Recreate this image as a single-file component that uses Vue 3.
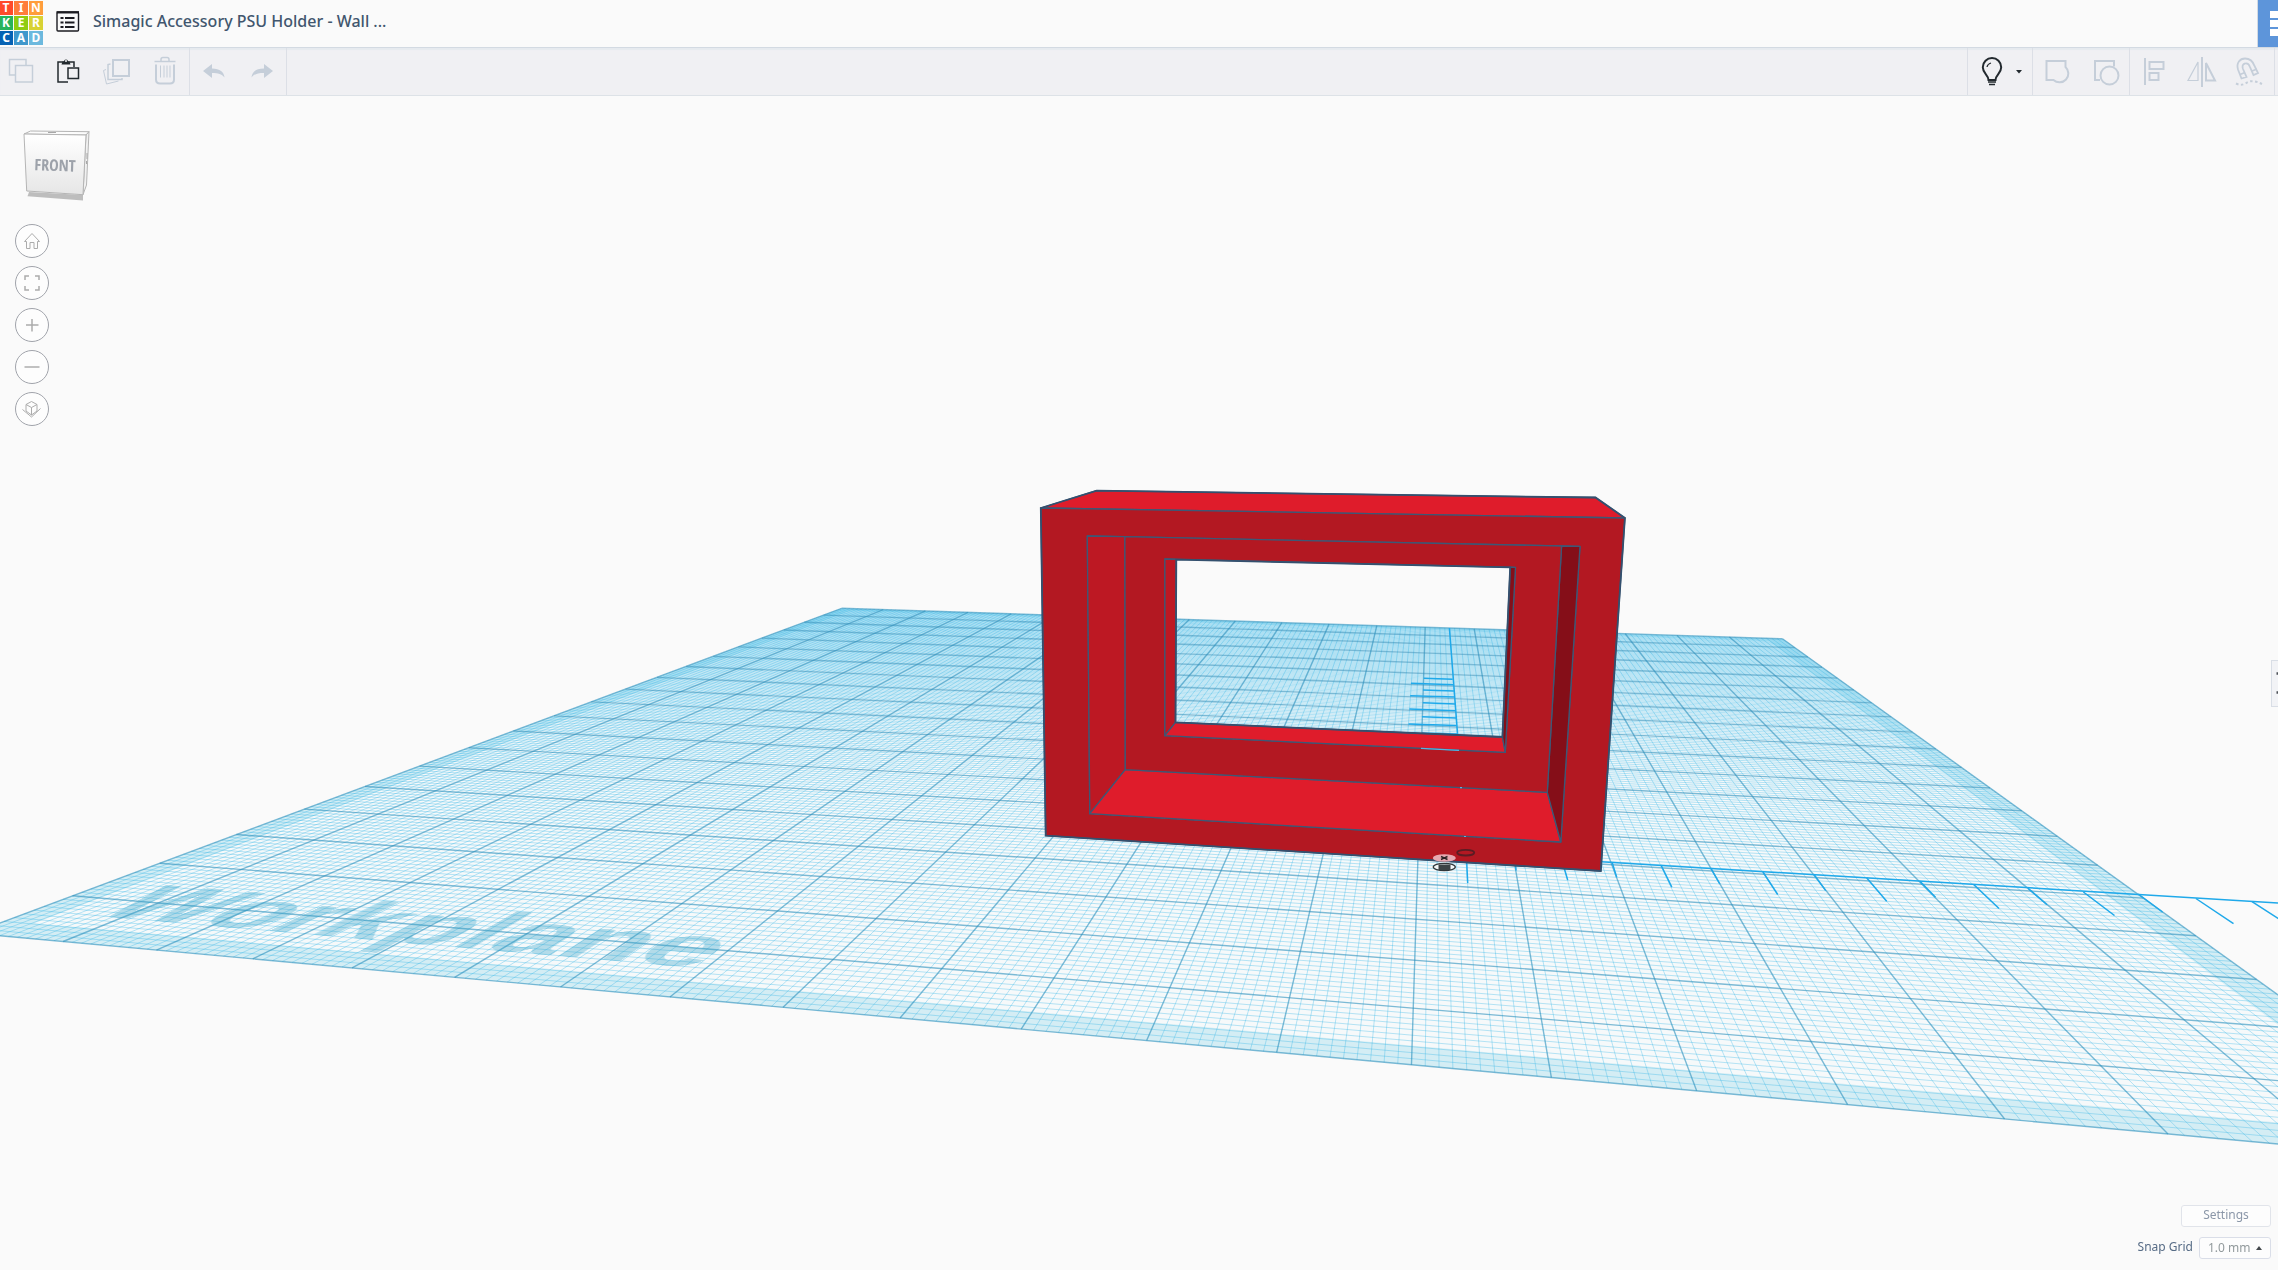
<script setup>
import { ref, computed, onMounted, onBeforeUnmount } from 'vue'

const SCENE_W = 2278
const TOP = 96
const CELLS = 20
const PLANE = 2000

/* corners of the workplane: back left, back right, front right, front left */
const corners = [[841.7, 608.3], [1782.5, 638.8], [2515.6, 1165.7], [-27.5, 933.2]]

function squareToQuad([p0, p1, p2, p3]) {
  const dx1 = p1[0] - p2[0], dx2 = p3[0] - p2[0], dx3 = p0[0] - p1[0] + p2[0] - p3[0]
  const dy1 = p1[1] - p2[1], dy2 = p3[1] - p2[1], dy3 = p0[1] - p1[1] + p2[1] - p3[1]
  const den = dx1 * dy2 - dx2 * dy1
  const g = (dx3 * dy2 - dx2 * dy3) / den
  const h = (dx1 * dy3 - dx3 * dy1) / den
  return {
    a: p1[0] - p0[0] + g * p1[0], b: p3[0] - p0[0] + h * p3[0], c: p0[0],
    d: p1[1] - p0[1] + g * p1[1], e: p3[1] - p0[1] + h * p3[1], f: p0[1],
    g, h
  }
}
const m = squareToQuad(corners)
function project(u, v) {
  const w = m.g * u + m.h * v + 1
  return [((m.a * u + m.b * v + m.c) / w).toFixed(2), ((m.d * u + m.e * v + m.f) / w).toFixed(2)]
}
const seg = (u0, v0, u1, v1) => `M${project(u0, v0)}L${project(u1, v1)}`

/* the two directions stay separate paths so that their opacities add up */
function gridPaths(count, skip) {
  let columns = ''
  let rows = ''
  for (let i = 0; i <= count; i++) {
    if (skip && i % skip === 0) continue
    const t = i / count
    columns += seg(t, 0, t, 1)
    rows += seg(0, t, 1, t)
  }
  return [columns, rows]
}
const minor = gridPaths(CELLS * 10, 10)
const major = gridPaths(CELLS, 0)
const poly = (pts) => 'M' + pts.map((p) => project(p[0], p[1])).join('L') + 'Z'
const outline = poly([[0, 0], [1, 0], [1, 1], [0, 1]])
const B = 0.016
const band = outline + poly([[B, B], [1 - B, B], [1 - B, 1 - B], [B, 1 - B]])

const scale = ref(window.innerWidth / SCENE_W)
const measure = () => { scale.value = document.documentElement.clientWidth / SCENE_W }
onMounted(() => { measure(); window.addEventListener('resize', measure) })
onBeforeUnmount(() => window.removeEventListener('resize', measure))

const planeTransform = computed(() => {
  const s = scale.value
  const n = PLANE
  const f = m.f - TOP
  const d = m.d - TOP * m.g
  const e = m.e - TOP * m.h
  return `matrix3d(${[
    s * m.a / n, s * d / n, 0, m.g / n,
    s * m.b / n, s * e / n, 0, m.h / n,
    0, 0, 1, 0,
    s * m.c, s * f, 0, 1
  ].join(',')})`
})

const logo = [
  ['T', '#ff4a2b'], ['I', '#ff7d3b'], ['N', '#ff9d3b'],
  ['K', '#27b35c'], ['E', '#8fcc12'], ['R', '#d8d234'],
  ['C', '#0562b4'], ['A', '#3f98cc'], ['D', '#6cb9de']
]

const ruler = 'M1449.4 628L1457.6 734.3M1600.8 861.7L2278 903'
const rulerTicks =
  'M1423.700 678.300L1452.700 679.300M1411 683.300L1453.500 684.700M1422.900 690L1453.900 691M1410.200 695.700L1454.700 697M1422.900 702.700L1455.500 704M1409.400 709L1455.500 710.700M1422 716.700L1456.300 718M1408.600 724L1456.700 725.500M1422 733L1457 734' +
  'M1466.700 861.700L1467.700 883M1515.700 865.500L1516 870.500M1564.300 868.500L1567.700 880M1612.300 863L1616.700 877.300' +
  'M1661 865.200L1671.800 887.200M1711 868.600L1719.800 884M1763 872L1777.700 894.500M1814 874.500L1825.700 890.600M1866.800 878L1886.700 901.300M1920 881.400L1935.500 897.200M1974 884.800L1999 908.500M2028 888.200L2047 904.800M2083.400 892L2114.500 915.500M2138.300 894L2162.500 912M2195.900 898.500L2233.500 923.700M2252 901.600L2290 926'
</script>

<template>
  <div class="app">
    <header class="header">
      <a class="logo" href="#" aria-label="Tinkercad">
        <span v-for="([letter, color]) in logo" :key="letter" class="tile" :style="{ background: color }">{{ letter }}</span>
      </a>
      <button class="menu" type="button" aria-label="My recent designs">
        <svg width="24" height="22" viewBox="0 0 24 22">
          <rect x="1" y="1.500" width="21.500" height="18.500" rx="1" fill="none" stroke="#1c1c22" stroke-width="1.400" />
          <path d="M0.500 1.200H23" stroke="#1c1c22" stroke-width="2.200" />
          <path d="M4.500 7h3M9 7h9.500M4.500 11.500h3M9 11.500h9.500M4.500 16h3M9 16h9.500" stroke="#1c1c22" stroke-width="2" />
        </svg>
      </button>
      <h1 class="title">Simagic Accessory PSU Holder - Wall ...</h1>
      <button class="grid-button" type="button" aria-label="3D design">
        <svg width="20" height="47" viewBox="0 0 20 47">
          <path d="M12 11h8v7h-8zM12 20h8v7h-8zM12 29h8v7h-8z" fill="#fff" />
        </svg>
      </button>
    </header>

    <nav class="toolbar" aria-label="Tools">
      <div class="group first">
        <button class="tool" type="button" aria-label="Copy" disabled>
          <svg viewBox="0 0 30 30"><path d="M9 18H3.500V2.500H20V8M9.500 8.500h17v16.500h-17z" /></svg>
        </button>
        <button class="tool dark" type="button" aria-label="Paste">
          <svg viewBox="0 0 30 30">
            <path d="M14 25H4V5H20V10M14 11h10.500v10.500h-10.500z" stroke-width="1.500" />
            <path d="M8.500 4.500h1.500a2 2 0 0 1 4 0h1.500l1 3h-9z" fill="#22292e" stroke="none" />
            <circle cx="12" cy="4" r="1" fill="#f0f0f3" stroke="none" />
          </svg>
        </button>
        <button class="tool" type="button" aria-label="Duplicate" disabled>
          <svg viewBox="0 0 30 30">
            <path d="M11 3h16v16h-16z" stroke-width="2" />
            <path d="M8.500 7l-2.500 .5V22.500h14v-1.500" /><path d="M4 12.500l-2.500 1 3 13.500 12-3" stroke-width="1" />
          </svg>
        </button>
        <button class="tool" type="button" aria-label="Delete" disabled>
          <svg viewBox="0 0 30 30">
            <path d="M4.500 4.500h21M11 4V2.500q0-2 2-2h4q2 0 2 2V4" />
            <path d="M6 7.500v15q0 4 4 4h10q4 0 4-4v-15" stroke-width="2" />
            <path d="M10.500 8.500v12M14 8.500v12M17 8.500v12M20 8.500v12" stroke-width="1" />
          </svg>
        </button>
      </div>
      <div class="group">
        <button class="tool" type="button" aria-label="Undo" disabled>
          <svg viewBox="0 0 30 30"><path d="M4 14L13 7v4.500c8 0 12 3.500 12.500 9-3-3.500-6-4.500-12.500-4.500v5z" fill="#c5ced9" stroke="none" /></svg>
        </button>
        <button class="tool" type="button" aria-label="Redo" disabled>
          <svg viewBox="0 0 30 30"><path d="M26 14L17 7v4.500c-8 0-12 3.500-12.500 9 3-3.500 6-4.500 12.500-4.500v5z" fill="#c5ced9" stroke="none" /></svg>
        </button>
      </div>
      <div class="group right">
        <button class="tool dark bulb" type="button" aria-label="Toggle notes visibility">
          <svg viewBox="0 0 30 30">
            <path d="M11.500 23c0-5-5.700-6.500-5.700-12.800a9.200 9.200 0 0 1 18.400 0c0 6.300-5.700 7.800-5.700 12.800z" stroke-width="2" />
            <path d="M10 10q.5-3 4-4" stroke-width="1.200" />
            <path d="M11 25h8M12 27.500h6" stroke-width="1.500" />
          </svg>
          <svg class="caret" viewBox="0 0 6 4"><path d="M0 0h6L3 3.500z" fill="#22292e" stroke="none" /></svg>
        </button>
      </div>
      <div class="group">
        <button class="tool" type="button" aria-label="Group" disabled>
          <svg viewBox="0 0 30 30"><path d="M4.500 4h19v6a8.500 8.500 0 1 1-12 13H4.500z" stroke-width="2" /></svg>
        </button>
        <button class="tool" type="button" aria-label="Ungroup" disabled>
          <svg viewBox="0 0 30 30"><path d="M10 23H5V4h19v5.500" stroke-width="2" /><circle cx="19.500" cy="18.500" r="9" stroke-width="2" /></svg>
        </button>
      </div>
      <div class="group last">
        <button class="tool" type="button" aria-label="Align" disabled>
          <svg viewBox="0 0 30 30">
            <path d="M6 1v27" stroke-width="2" /><path d="M10.500 5h14v7h-14zM10.500 16h9v7h-9z" stroke-width="2" />
          </svg>
        </button>
        <button class="tool" type="button" aria-label="Mirror" disabled>
          <svg viewBox="0 0 30 30">
            <path d="M15 0v30" stroke-width="2" /><path d="M11 5v18.500H1z" stroke-width="1.200" /><path d="M19 6v17.500h9z" stroke-width="2" />
          </svg>
        </button>
        <button class="tool" type="button" aria-label="Cruise" disabled>
          <svg viewBox="0 0 30 30">
            <path d="M6.500 21.500L3 12.500C1 6 5 1.500 10 1.500c5 0 8 3 9.500 7.500l3.500 7-4.500 2-3.500-8c-1-3-3-4-5-3.500-2.500.5-3 3-2 5.500l3.500 8zM5 17.500l5-2M17 14l5-2" stroke-width="1.800" />
            <path d="M1 26.500c6 3 9 0 12-1.500s8-1 14 2" stroke-width="2" stroke-dasharray="2.500 2.500" />
          </svg>
        </button>
      </div>
    </nav>

    <main class="viewport">
      <svg class="scene" viewBox="0 96 2278 1174" aria-hidden="true">
        <path :d="outline" fill="#3fbcec" fill-opacity="0.02" />
        <path :d="band" fill="#3fb8da" fill-opacity="0.18" fill-rule="evenodd" />
        <path v-for="(d, i) in minor" :key="'minor' + i" :d="d" class="minor" />
        <path v-for="(d, i) in major" :key="'major' + i" :d="d" class="major" />
        <path :d="ruler" class="ruler" />
        <path :d="rulerTicks" class="ruler" />
      </svg>
      <div class="plane" :style="{ transform: planeTransform }">
        <span class="plane-label">Workplane</span>
      </div>
      <svg class="scene" viewBox="0 96 2278 1174" role="img" aria-label="Red wall holder model">
        <g stroke="#3d5876" stroke-width="1.300" stroke-linejoin="round">
          <path d="M1040.800 508L1096.700 490.700 1595.500 497.500 1624.900 518z" fill="#df1c2b" />
          <path fill-rule="evenodd" fill="#b31822" d="M1040.800 508L1624.900 518 1600.800 871 1045.700 835.700zM1087.300 536L1089.800 813.700 1560.800 842 1580 546.300z" />
          <path fill="#bd1823" d="M1087.300 536L1124.900 536.700 1125.300 769.700 1089.800 813.700z" />
          <path fill="#df1c2b" d="M1125.300 769.700L1547.300 792.300 1560.800 842 1089.800 813.700z" />
          <path fill="#850e18" d="M1561.600 546L1580 546.300 1560.800 842 1547.300 792.300z" />
          <path fill-rule="evenodd" fill="#b31822" d="M1124.900 536.700L1561.600 546 1547.300 792.300 1125.300 769.700zM1164.900 559L1164.900 735.700 1505.300 752.300 1515.500 567.300z" />
          <path fill="#bd1823" d="M1164.900 559L1176.300 559.300 1175.500 722.300 1164.900 735.700z" />
          <path fill="#df1c2b" d="M1175.500 722.300L1502.400 737 1505.300 752.300 1164.900 735.700z" />
          <path fill="#850e18" d="M1510.200 567.200L1515.500 567.300 1505.300 752.300 1502.400 737z" />
        </g>
        <path d="M1040.800 508L1096.700 490.700 1595.500 497.500 1624.900 518 1600.800 871 1045.700 835.700zM1176.300 559.700L1510.200 567.300 1502.400 737 1175.500 722.300z" fill="none" stroke="#34506e" stroke-width="1.800" />
        <path d="M1421 748.300L1459 750.300M1460 787.700h2M1464 836.500h2" stroke="#55b4e2" stroke-width="1.200" />
        <ellipse cx="1465.700" cy="852.700" rx="8.500" ry="2.800" fill="none" stroke="#5a1d24" stroke-width="1.800" />
        <ellipse cx="1444.300" cy="858" rx="11.500" ry="3.800" fill="#e6a9b1" />
        <path d="M1441 856.500l6.500 3M1447.500 856.500l-6.500 3" stroke="#2b2224" stroke-width="1.400" />
        <ellipse cx="1444.300" cy="867" rx="11" ry="3.600" fill="#f3f7f8" stroke="#30373a" stroke-width="1.300" />
        <path d="M1438.500 864.500h12v5.500h-12z" fill="#3c4346" />
      </svg>

      <aside class="nav-controls">
        <button class="cube" type="button" aria-label="View cube, front">
          <svg width="68" height="74" viewBox="23 129 68 74">
            <defs>
              <linearGradient id="face" x1="0" y1="0" x2="0" y2="1">
                <stop offset="0" stop-color="#ffffff" /><stop offset="1" stop-color="#e6e6e6" />
              </linearGradient>
            </defs>
            <path d="M29 192L83 195 83 200.500 27.500 196.300z" fill="#bdbdbd" />
            <g stroke="#b4b4b4" stroke-width="1">
              <path d="M24 134L30.500 131 89 131.700 86 135z" fill="#fcfcfc" />
              <path d="M86 135L89 131.700 86.500 185 83 194.700z" fill="#f1f1f1" />
              <path d="M24 134L86 135 83 194.700 26.700 191z" fill="url(#face)" />
            </g>
            <path d="M48 132.500h8M87 153v6M86.500 161v3" stroke="#a8a8a8" stroke-width="1" />
            <text x="55" y="171" class="cube-text" transform="rotate(2 55 166)">FRONT</text>
          </svg>
        </button>
        <button class="round" type="button" aria-label="Home view">
          <svg viewBox="0 0 34 34"><path d="M9.500 17.500L17 9.500l7.500 8h-2v7H19v-6h-4v6h-3.500v-7z" /></svg>
        </button>
        <button class="round" type="button" aria-label="Fit all in view">
          <svg viewBox="0 0 34 34"><path d="M10 14v-4h4M20 10h4v4M24 20v4h-4M14 24h-4v-4" stroke-width="1.500" /></svg>
        </button>
        <button class="round" type="button" aria-label="Zoom in">
          <svg viewBox="0 0 34 34"><path d="M11 17h12.500M17 11v12.500" stroke-width="1.500" /></svg>
        </button>
        <button class="round" type="button" aria-label="Zoom out">
          <svg viewBox="0 0 34 34"><path d="M9.500 17h15" stroke-width="1.500" /></svg>
        </button>
        <button class="round" type="button" aria-label="Switch to flat view">
          <svg viewBox="0 0 34 34"><path d="M16.500 9.500l5.500 3v6.500l-5.500 4-5.500-4v-6.500zM11 12.500l5.500 3 5.500-3M16.500 15.500v7.500M7.500 17.500l9 7.500 9-8.500" /></svg>
        </button>
      </aside>

      <button class="panel-handle" type="button" aria-label="Show shapes panel">
        <svg width="6" height="45" viewBox="0 0 6 45"><path d="M4.500 12.500H6M4.500 31.500H6" stroke="#4c5157" stroke-width="2.500" /></svg>
      </button>

      <form class="grid-settings" @submit.prevent>
        <button class="settings" type="button">Settings</button>
        <div class="snap">
          <label for="snap">Snap Grid</label>
          <div class="select-wrap">
            <select id="snap"><option>1.0 mm</option></select>
            <svg class="up" width="6" height="4" viewBox="0 0 6 4"><path d="M0 4h6L3 0z" fill="#44484c" /></svg>
          </div>
        </div>
      </form>
    </main>
  </div>
</template>

<style>
body { background: #fafafa; }
</style>

<style scoped>
.app {
  display: flex;
  flex-direction: column;
  min-height: 100vh;
  overflow: hidden;
  background: #fafafa;
  font-family: "Noto Sans", sans-serif;
}
button { padding: 0; margin: 0; border: 0; background: none; font: inherit; }
svg { display: block; }
.header {
  display: flex;
  align-items: flex-start;
  height: 47px;
  border-bottom: 1px solid #d3dae2;
}
.logo {
  display: grid;
  grid-template-columns: repeat(3, 14px);
  grid-auto-rows: 14px;
  gap: 1px;
  margin: 1px 0 0 -1px;
  text-decoration: none;
}
.tile {
  color: #fff;
  font: 700 12px/14px "Noto Sans", sans-serif;
  text-align: center;
}
.menu { margin: 11px 0 0 13px; }
.title {
  flex: 1;
  margin: 10px 0 0 13px;
  color: #41566e;
  font-size: 16px;
  font-weight: 500;
  line-height: 22px;
}
.grid-button { background: #5d95da; border-left: 1px solid #d3dae2; }
.toolbar {
  display: flex;
  height: 47px;
  border-bottom: 1px solid #dde2e7;
  background: #f0f0f3;
  box-shadow: inset 0 2px 1px #e6eaef;
}
.group { display: flex; border-right: 1px solid #dcdfe6; }
.group.first { margin-left: -3px; }
.group.right { margin-left: auto; border-left: 1px solid #dcdfe6; }
.group.last { margin-right: 3px; }
.tool {
  display: flex;
  align-items: center;
  justify-content: center;
  width: 48px;
}
.tool svg { width: 30px; height: 30px; overflow: visible; fill: none; stroke: #c5ced9; stroke-width: 1.5px; }
.tool.dark svg { stroke: #22292e; }
.tool.bulb { width: 64px; gap: 9px; padding-right: 2px; }
.tool .caret { width: 6px; height: 4px; }
.viewport { position: relative; flex: 1; }
.scene { position: absolute; top: 0; left: 0; width: 100%; height: auto; }
.minor { fill: none; stroke: #25b0e6; stroke-opacity: 0.32; stroke-width: 1px; }
.major { fill: none; stroke: #2a8fbc; stroke-opacity: 0.6; stroke-width: 1.4px; }
.ruler { fill: none; stroke: #1fa9ea; stroke-width: 1.5px; }
.plane {
  position: absolute;
  top: 0;
  left: 0;
  box-sizing: border-box;
  display: flex;
  align-items: flex-end;
  width: 2000px;
  height: 2000px;
  padding: 0 0 40px 64px;
  transform-origin: 0 0;
  pointer-events: none;
}
.plane-label {
  color: rgba(50, 160, 200, 0.34);
  font: 700 124px/124px "Liberation Sans", sans-serif;
}
.nav-controls {
  position: absolute;
  top: 33px;
  left: 15px;
  display: flex;
  flex-direction: column;
  gap: 8px;
}
.cube { margin: 0 0 13px 8px; }
.cube-text { fill: #9da2aa; font: 700 16px "Liberation Sans Narrow", "Open Sans Condensed", sans-serif; text-anchor: middle; }
.round {
  box-sizing: border-box;
  width: 34px;
  height: 34px;
  border: 1px solid #a0a3aa;
  border-radius: 50%;
  background: #fdfdfd;
}
.round svg { width: 34px; height: 34px; margin: -1px; fill: none; stroke: #acacac; }
.panel-handle {
  position: absolute;
  top: 564px;
  right: 0;
  box-sizing: border-box;
  width: 7px;
  height: 47px;
  overflow: hidden;
  border: 1px solid #d9dee6;
  border-right: 0;
  background: #f2f3f6;
}
.grid-settings {
  position: absolute;
  right: 7px;
  bottom: 11px;
  display: flex;
  flex-direction: column;
  align-items: flex-end;
  gap: 10px;
  font-size: 12px;
  line-height: 20px;
}
.settings {
  box-sizing: border-box;
  width: 90px;
  height: 22px;
  padding-bottom: 2px;
  border: 1px solid #e1e4ea;
  border-radius: 3px;
  background: #fdfdfd;
  color: #8b97a8;
  line-height: 18px;
}
.snap { display: flex; gap: 6px; color: #566b85; }
.select-wrap { position: relative; }
select {
  display: block;
  box-sizing: border-box;
  width: 72px;
  height: 22px;
  padding: 0 0 2px 8px;
  border: 1px solid #dadee8;
  border-radius: 3px;
  background: #fdfdfd;
  color: #929a9c;
  font: inherit;
  appearance: none;
}
.up { position: absolute; top: 9px; right: 9px; pointer-events: none; }
</style>
